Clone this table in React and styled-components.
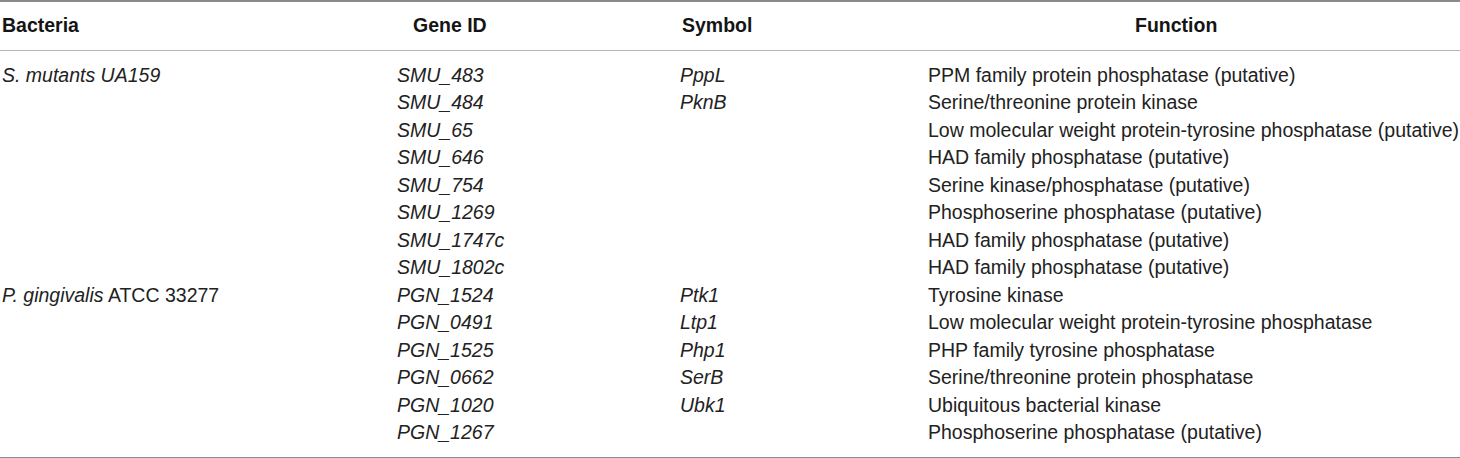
import React from 'react';
import styled, { createGlobalStyle } from 'styled-components';

const GlobalStyle = createGlobalStyle`
  html, body {
    margin: 0;
    padding: 0;
    background: #fff;
  }
  body {
    font-family: "Liberation Sans", Arial, sans-serif;
    color: #222;
  }
`;

const rows = [
  { bacteria: <><i>S. mutants UA159</i></>, gene: 'SMU_483', symbol: 'PppL', fn: 'PPM family protein phosphatase (putative)' },
  { gene: 'SMU_484', symbol: 'PknB', fn: 'Serine/threonine protein kinase' },
  { gene: 'SMU_65', fn: 'Low molecular weight protein-tyrosine phosphatase (putative)' },
  { gene: 'SMU_646', fn: 'HAD family phosphatase (putative)' },
  { gene: 'SMU_754', fn: 'Serine kinase/phosphatase (putative)' },
  { gene: 'SMU_1269', fn: 'Phosphoserine phosphatase (putative)' },
  { gene: 'SMU_1747c', fn: 'HAD family phosphatase (putative)' },
  { gene: 'SMU_1802c', fn: 'HAD family phosphatase (putative)' },
  { bacteria: <><i>P. gingivalis</i> ATCC 33277</>, gene: 'PGN_1524', symbol: 'Ptk1', fn: 'Tyrosine kinase' },
  { gene: 'PGN_0491', symbol: 'Ltp1', fn: 'Low molecular weight protein-tyrosine phosphatase' },
  { gene: 'PGN_1525', symbol: 'Php1', fn: 'PHP family tyrosine phosphatase' },
  { gene: 'PGN_0662', symbol: 'SerB', fn: 'Serine/threonine protein phosphatase' },
  { gene: 'PGN_1020', symbol: 'Ubk1', fn: 'Ubiquitous bacterial kinase' },
  { gene: 'PGN_1267', fn: 'Phosphoserine phosphatase (putative)' }
];

const Table = styled.table`
  width: 1460px;
  border-collapse: collapse;
  table-layout: fixed;
  font-size: 19.5px;
  border-top: 2px solid #8a8a8a;
  border-bottom: 2px solid #8a8a8a;
`;

const HeadRow = styled.tr`
  height: 49px;
  border-bottom: 1.5px solid #b4b4b4;
`;

const Th = styled.th`
  padding: 0 0 0 ${props => props.indent || 0}px;
  text-align: left;
  font-weight: bold;
  color: #151515;
  white-space: nowrap;
`;

const Row = styled.tr`
  height: 27.5px;

  &:first-child td {
    padding-top: 11px;
  }
  &:last-child td {
    padding-bottom: 10px;
  }
`;

const Td = styled.td`
  padding: 0 0 0 ${props => props.indent || 0}px;
  white-space: nowrap;
  line-height: 27.5px;
  font-style: ${props => (props.italic ? 'italic' : 'normal')};
  vertical-align: middle;
`;

export default function App() {
  return (
    <>
      <GlobalStyle />
      <Table>
        <colgroup>
          <col style={{ width: 397 }} />
          <col style={{ width: 283 }} />
          <col style={{ width: 248 }} />
          <col style={{ width: 532 }} />
        </colgroup>
        <thead>
          <HeadRow>
            <Th indent={2}>Bacteria</Th>
            <Th indent={16}>Gene ID</Th>
            <Th indent={2}>Symbol</Th>
            <Th indent={207}>Function</Th>
          </HeadRow>
        </thead>
        <tbody>
          {rows.map(r => (
            <Row key={r.gene}>
              <Td indent={2}>{r.bacteria}</Td>
              <Td italic>{r.gene}</Td>
              <Td italic>{r.symbol}</Td>
              <Td>{r.fn}</Td>
            </Row>
          ))}
        </tbody>
      </Table>
    </>
  );
}
